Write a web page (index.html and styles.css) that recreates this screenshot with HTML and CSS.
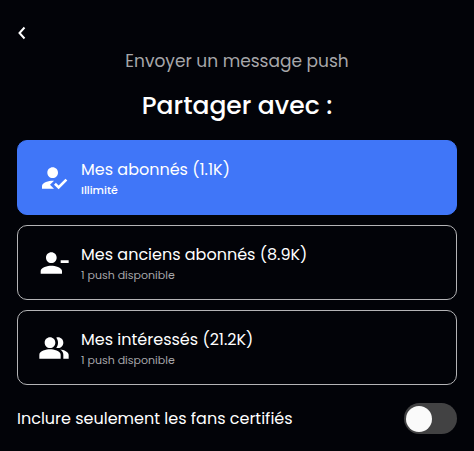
FILE: index.html
```html
<!DOCTYPE html>
<html lang="fr">
<head>
<meta charset="utf-8">
<meta name="viewport" content="width=device-width, initial-scale=1">
<title>Envoyer un message push</title>
<link rel="stylesheet" href="styles.css">
</head>
<body>
<main class="page">
  <button class="back" type="button" aria-label="Retour">
    <svg class="back-icon" viewBox="0 0 10 14" aria-hidden="true"><path d="M7.5 1.5 2.5 7l5 5.5"/></svg>
  </button>
  <p class="subtitle">Envoyer un message push</p>
  <h1 class="title">Partager avec :</h1>
  <div class="options">
    <button class="option selected" type="button" aria-pressed="true">
      <svg class="icon" viewBox="0 0 24 24" aria-hidden="true"><path d="m9 17 3-2.94c-.39-.04-.68-.06-1-.06-2.67 0-8 1.34-8 4v2h9l-3-3zm2-5c2.21 0 4-1.79 4-4s-1.79-4-4-4-4 1.79-4 4 1.79 4 4 4m4.47 8.5L12 17l1.4-1.41 2.07 2.08 5.13-5.17 1.4 1.41-6.53 6.59z"/></svg>
      <span class="text">
        <span class="name">Mes abonnés (1.1K)</span>
        <span class="quota">Illimité</span>
      </span>
    </button>
    <button class="option" type="button" aria-pressed="false">
      <svg class="icon" viewBox="0 0 24 24" aria-hidden="true"><path d="M14 8c0-2.21-1.79-4-4-4S6 5.79 6 8s1.79 4 4 4 4-1.79 4-4zm3 2v2h6v-2h-6zM2 18v2h16v-2c0-2.66-5.33-4-8-4s-8 1.34-8 4z"/></svg>
      <span class="text">
        <span class="name">Mes anciens abonnés (8.9K)</span>
        <span class="quota">1 push disponible</span>
      </span>
    </button>
    <button class="option" type="button" aria-pressed="false">
      <svg class="icon" viewBox="0 0 24 24" aria-hidden="true"><path d="M16.67 13.13C18.04 14.06 19 15.32 19 17v3h4v-3c0-2.18-3.57-3.47-6.33-3.87zM15 12c2.21 0 4-1.79 4-4s-1.79-4-4-4c-.47 0-.91.1-1.33.24C14.5 5.27 15 6.58 15 8s-.5 2.73-1.33 3.76c.42.14.86.24 1.33.24zM9 12c2.21 0 4-1.79 4-4s-1.79-4-4-4-4 1.79-4 4 1.79 4 4 4zM9 13c-2.67 0-8 1.34-8 4v3h16v-3c0-2.66-5.33-4-8-4z"/></svg>
      <span class="text">
        <span class="name">Mes intéressés (21.2K)</span>
        <span class="quota">1 push disponible</span>
      </span>
    </button>
  </div>
  <div class="certified">
    <label class="certified-label" for="certified">Inclure seulement les fans certifiés</label>
    <input class="switch" id="certified" type="checkbox" role="switch">
  </div>
</main>
</body>
</html>
```
FILE: styles.css
```css
* {
  box-sizing: border-box;
}

body {
  margin: 0;
  background: #020308;
  color: #fff;
  font-family: Poppins, Inter, sans-serif;
}

.page {
  padding: 24px 17px 16px;
}

.back {
  display: flex;
  align-items: center;
  width: 24px;
  height: 18px;
  padding: 0;
  border: 0;
  background: none;
}

.back-icon {
  width: 10px;
  height: 14px;
  fill: none;
  stroke: #fff;
  stroke-width: 2;
}

.subtitle {
  margin: 6px 0 0;
  color: #a7a7aa;
  font-size: 17px;
  line-height: 26px;
  text-align: center;
}

.title {
  margin: 14px 0 16px;
  font-size: 25px;
  font-weight: 500;
  line-height: 36px;
  text-align: center;
}

.options {
  display: flex;
  flex-direction: column;
  gap: 10px;
}

.option {
  display: flex;
  align-items: center;
  gap: 11px;
  width: 100%;
  min-height: 75px;
  padding: 12px 20px;
  border: 1px solid #b4b4b6;
  border-radius: 10px;
  background: transparent;
  color: #fff;
  font: inherit;
  text-align: left;
}

.selected {
  border-color: #4076f8;
  background: #4076f8;
}

.icon {
  flex: none;
  width: 32px;
  height: 32px;
  fill: #fff;
}

.text {
  display: flex;
  flex-direction: column;
}

.name {
  font-size: 16px;
  line-height: 24px;
}

.quota {
  color: #a7a7aa;
  font-size: 11px;
  line-height: 16px;
}

.selected .quota {
  color: #fff;
  font-weight: 500;
}

.certified {
  display: flex;
  align-items: center;
  justify-content: space-between;
  margin-top: 18px;
}

.certified-label {
  font-size: 16px;
  line-height: 24px;
}

.switch {
  flex: none;
  display: flex;
  align-items: center;
  width: 53px;
  height: 31px;
  margin: 0;
  padding: 0 2px;
  border-radius: 16px;
  background: #424243;
  appearance: none;
}

.switch::before {
  content: "";
  width: 26px;
  height: 26px;
  border-radius: 50%;
  background: #fafafa;
}

.switch:checked {
  justify-content: flex-end;
  background: #4076f8;
}
```
